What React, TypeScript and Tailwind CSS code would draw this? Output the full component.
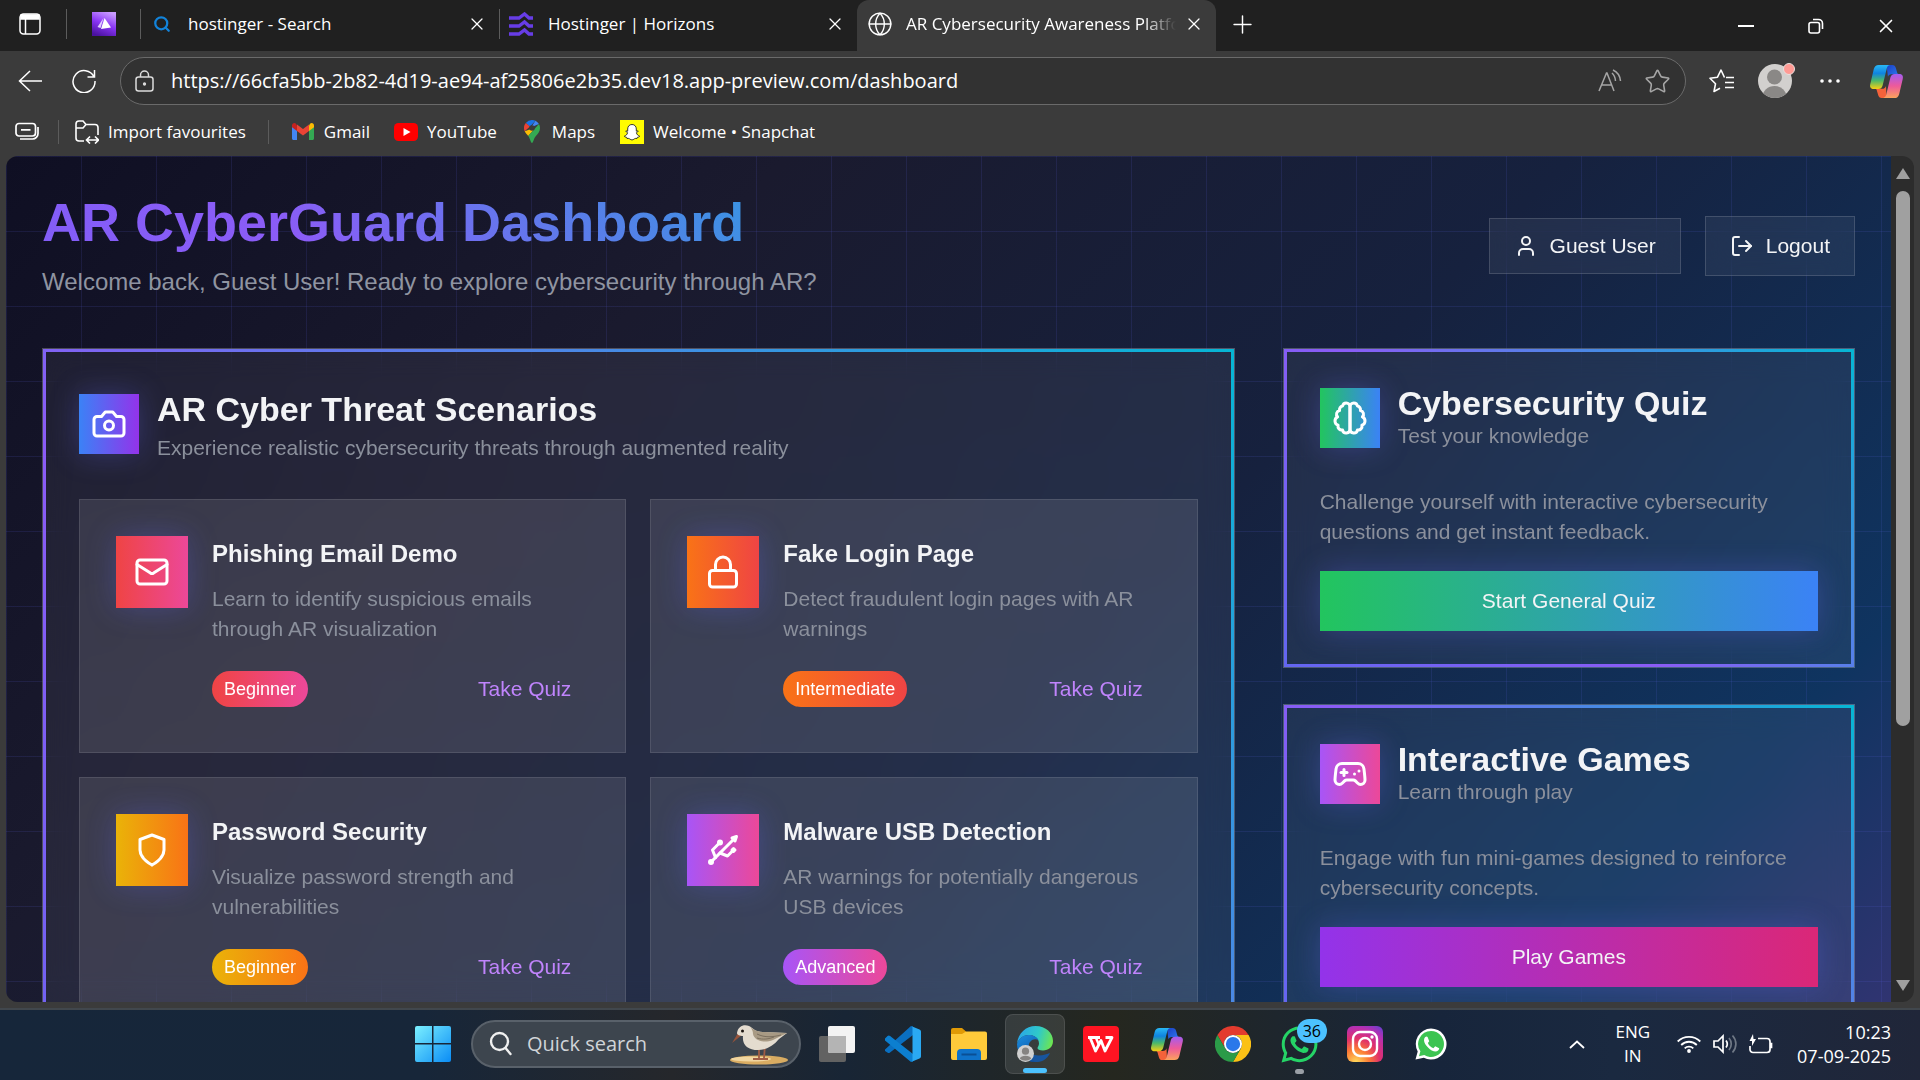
import React from "react";
import { Mail, Lock, Gamepad2, User, LogOut, X, Plus, Globe, Star, Search } from "lucide-react";
import { FaWhatsapp } from "react-icons/fa";

const UI = "font-['Open_Sans','Noto_Sans',sans-serif]";

type P = { className?: string };

function Copilot({ className }: P) {
  return (
    <svg viewBox="0 0 36 36" className={className} aria-hidden="true">
      <defs>
        <linearGradient id="cpA" x1="0" y1="0" x2="0" y2="1">
          <stop offset="0" stopColor="#29b8f5" />
          <stop offset=".35" stopColor="#0f83e0" />
          <stop offset=".65" stopColor="#4bb86a" />
          <stop offset="1" stopColor="#f7cf12" />
        </linearGradient>
        <linearGradient id="cpB" x1="0" y1="0" x2="0" y2="1">
          <stop offset="0" stopColor="#a45cf0" />
          <stop offset=".5" stopColor="#ee5a9a" />
          <stop offset="1" stopColor="#fba35c" />
        </linearGradient>
        <linearGradient id="cpC" x1="0" y1="0" x2="1" y2="1">
          <stop offset="0" stopColor="#1a3fc4" />
          <stop offset="1" stopColor="#2f7cf0" />
        </linearGradient>
      </defs>
      <path d="M18 1h6c2 0 3 1 3.600 3l1.400 5c.4 1 1 1.500 2 1.500h-8c-2 0-3 1-3.500 2.500z" fill="url(#cpC)" />
      <path d="M18 35h-5c-2 0-3-1-3.600-3L8 27c-.4-1-1-1.500-2-1.500h7c3 0 4-1.500 4.500-3z" fill="#f4623a" />
      <path d="M10 1h12c-2 0-3 1.300-3.600 3L14 22c-.7 2.400-2 3.700-4.500 3.700H5c-3 0-4.500-2-3.700-5L5 5c.9-2.800 2.200-4 5-4z" fill="url(#cpA)" />
      <path d="M26 35H14c2 0 3-1.300 3.600-3L22 14c.7-2.400 2-3.700 4.500-3.700H31c3 0 4.500 2 3.700 5L31 31c-.9 2.800-2.200 4-5 4z" fill="url(#cpB)" />
    </svg>
  );
}

function Line({ className, children }: { className?: string; children: React.ReactNode }) {
  return (
    <svg viewBox="0 0 24 24" fill="none" stroke="currentColor" strokeWidth="2" strokeLinecap="round" strokeLinejoin="round" className={className} aria-hidden="true">
      {children}
    </svg>
  );
}

function Brain({ className }: P) {
  return (
    <Line className={className}>
      <path d="M9.500 2A2.500 2.500 0 0 1 12 4.500v15a2.500 2.500 0 0 1-4.960.44 2.500 2.500 0 0 1-2.960-3.080 3 3 0 0 1-.34-5.580 2.500 2.500 0 0 1 1.320-4.240 2.500 2.500 0 0 1 1.980-3A2.500 2.500 0 0 1 9.500 2Z" />
      <path d="M14.500 2A2.500 2.500 0 0 0 12 4.500v15a2.500 2.500 0 0 0 4.960.44 2.500 2.500 0 0 0 2.960-3.080 3 3 0 0 0 .34-5.580 2.500 2.500 0 0 0-1.320-4.240 2.500 2.500 0 0 0-1.980-3A2.500 2.500 0 0 0 14.500 2Z" />
    </Line>
  );
}

function ShieldIcon({ className }: P) {
  return (
    <Line className={className}>
      <path d="M12 22s8-4 8-10V5l-8-3-8 3v7c0 6 8 10 8 10" />
    </Line>
  );
}

function CameraIcon({ className }: P) {
  return (
    <Line className={className}>
      <path d="M14.500 4h-5L7 7H4a2 2 0 0 0-2 2v9a2 2 0 0 0 2 2h16a2 2 0 0 0 2-2V9a2 2 0 0 0-2-2h-3l-2.500-3z" />
      <circle cx="12" cy="13" r="3" />
    </Line>
  );
}

function UsbIcon({ className }: P) {
  return (
    <Line className={className}>
      <circle cx="10" cy="7" r="1" fill="currentColor" />
      <circle cx="4" cy="20" r="1" fill="currentColor" />
      <path d="M4.700 19.300 19 5" />
      <path d="m21 3-3 1 2 2Z" fill="currentColor" />
      <path d="M9.260 7.680 5 12l2 5" />
      <path d="m10 14 5 2 3.500-3.500" />
      <path d="m18 12 1-1 1 1-1 1Z" fill="currentColor" />
    </Line>
  );
}

/* ---------- browser chrome ---------- */

function TabStrip() {
  return (
    <div className="flex h-[51px] shrink-0 items-center bg-[#202020] pb-[3px] pl-[18px] text-[17px] text-white">
      <button aria-label="Tab actions" className="w-6">
        <svg viewBox="0 0 24 24" className="size-6" fill="none" stroke="#fff" strokeWidth="1.500">
          <rect x="2" y="2" width="20" height="20" rx="3.500" />
          <path d="M3 3h18v4H3z" fill="#fff" />
          <path d="M7.500 7v15" />
        </svg>
      </button>
      <span className="ml-6 h-[30px] w-px bg-[#5c5c5c]" />
      <button aria-label="Pinned tab" className="ml-[25px]">
        <svg viewBox="0 0 24 24" className="size-6">
          <defs>
            <linearGradient id="pin" x1=".3" y1="1" x2=".7" y2="0">
              <stop offset="0" stopColor="#4a12a0" />
              <stop offset=".5" stopColor="#8a35f5" />
              <stop offset="1" stopColor="#c99bff" />
            </linearGradient>
          </defs>
          <path d="M0 0h24v24H0z" fill="url(#pin)" />
          <path d="M11.500 6 5.500 15l3 1z" fill="#e2cfff" />
          <path d="M12.500 6 9 17l10-1.500z" fill="#fff" />
        </svg>
      </button>
      <span className="ml-6 h-[30px] w-px bg-[#5c5c5c]" />
      <div className="flex w-[358px] shrink-0 items-center pl-3">
        <Search className="size-[18px] text-[#1283da]" strokeWidth={3} />
        <span className="ml-[17px] flex-1">hostinger - Search</span>
        <button aria-label="Close tab" className="mr-3">
          <X className="size-5" strokeWidth={1.5} />
        </button>
      </div>
      <span className="h-[30px] w-px bg-[#5c5c5c]" />
      <div className="flex w-[357px] shrink-0 items-center pl-[9px]">
        <svg viewBox="0 0 24 24" className="size-6" fill="none" stroke="#673de6" strokeWidth="3.400">
          <path d="M0 6h10l5.500-4L20 6h4M0 14h10l5.500-4 4.500 4h4M0 22h10l5.500-4 4.500 4h4" />
        </svg>
        <span className="ml-[15px] flex-1">Hostinger | Horizons</span>
        <button aria-label="Close tab" className="mr-3">
          <X className="size-5" strokeWidth={1.5} />
        </button>
      </div>
      <div className="flex h-[51px] w-[359px] shrink-0 items-center self-start rounded-t-xl bg-[#3b3b3b] pr-3 pb-[3px] pl-[10px]">
        <Globe className="size-[26px]" strokeWidth={1.3} />
        <span className="ml-[13px] min-w-0 flex-1 overflow-hidden whitespace-nowrap [mask-image:linear-gradient(90deg,#000_88%,transparent)]">
          AR Cybersecurity Awareness Platform
        </span>
        <button aria-label="Close tab" className="ml-2">
          <X className="size-5" strokeWidth={1.5} />
        </button>
      </div>
      <button aria-label="New tab" className="ml-3">
        <Plus className="size-[29px]" strokeWidth={1.2} />
      </button>
      <div className="ml-auto flex items-center gap-[54px] pt-1 pr-[26px]">
        <button aria-label="Minimise" className="flex h-4 w-4 items-center">
          <span className="block h-0.5 w-4 bg-white" />
        </button>
        <button aria-label="Restore">
          <svg viewBox="0 0 16 16" className="size-4" fill="none" stroke="#fff" strokeWidth="1.600">
            <rect x="1" y="4.500" width="10.500" height="10.500" rx="2" />
            <path d="M5 1.500h5.500a4 4 0 0 1 4 4V11" />
          </svg>
        </button>
        <button aria-label="Close window">
          <X className="-m-[3px] size-[22px]" strokeWidth={1.8} />
        </button>
      </div>
    </div>
  );
}

function AddressBar() {
  return (
    <div className="flex h-[60px] shrink-0 items-center pr-4 pl-[18px] text-white">
      <button aria-label="Back">
        <svg viewBox="0 0 24 24" className="size-6" fill="none" stroke="#fff" strokeWidth="1.500">
          <path d="M24 12H1M12 2 1.500 12 12 22" />
        </svg>
      </button>
      <button aria-label="Reload" className="ml-[30px]">
        <svg viewBox="0 0 24 24" className="size-6" fill="none" stroke="#fff" strokeWidth="1.500">
          <path d="M22 8A11 11 0 1 0 23 12M22.500 1v7h-7" />
        </svg>
      </button>
      <div className="ml-6 flex h-12 flex-1 items-center rounded-full border border-[#6a6a6a] bg-[#323232] pr-[14px] pl-[14px]">
        <svg viewBox="0 0 20 22" className="h-[22px] w-5" fill="none" stroke="#dcdcdc" strokeWidth="1.500" aria-hidden="true">
          <rect x="1" y="7" width="17" height="14" rx="2.500" />
          <path d="M5.500 7V5a4 4 0 0 1 8 0v2" />
          <circle cx="9.500" cy="14" r=".9" fill="#dcdcdc" />
        </svg>
        <input
          aria-label="Address"
          className="ml-4 min-w-0 flex-1 bg-transparent text-[20px] text-white outline-none"
          defaultValue="https://66cfa5bb-2b82-4d19-ae94-af25806e2b35.dev18.app-preview.com/dashboard"
        />
        <button aria-label="Read aloud">
          <svg viewBox="0 0 24 24" className="size-6" fill="none" stroke="#a6a6a6" strokeWidth="1.500">
            <path d="M1 22 8.500 4h.5L16 22M3.500 16h10M14 4c2 1.800 3.300 4.500 3.500 8M15 1c4 1.800 7 5.500 7.500 11" />
          </svg>
        </button>
        <button aria-label="Add to favourites" className="ml-[22px]">
          <Star className="size-[27px] text-[#a6a6a6]" strokeWidth={1.4} />
        </button>
      </div>
      <button aria-label="Favourites" className="ml-[23px]">
        <svg viewBox="0 0 26 24" className="h-6 w-[26px]" fill="none" stroke="#fff" strokeWidth="1.600" strokeLinejoin="round">
          <path d="M15.500 8.500 12 1 8.500 8.200 1 9.300l5.500 5.500L5 22.500l6-3.300M17 8.500h8M16 13.500h9M16 18.500h9" />
        </svg>
      </button>
      <button aria-label="Profile" className="relative ml-[22px]">
        <svg viewBox="0 0 36 36" className="size-9">
          <clipPath id="av"><circle cx="18" cy="18" r="17" /></clipPath>
          <g clipPath="url(#av)">
            <path d="M0 0h36v36H0z" fill="#d2d0ce" />
            <circle cx="17.500" cy="14" r="7.500" fill="#8a8886" />
            <ellipse cx="17.500" cy="34" rx="12" ry="11" fill="#8a8886" />
          </g>
        </svg>
        <span className="absolute top-0 -right-0.5 size-3 rounded-full border border-[#e8e0de] bg-[#ff9a94]" />
      </button>
      <button aria-label="Settings and more" className="ml-[27px]">
        <svg viewBox="0 0 20 4" className="h-1 w-5" fill="#fff"><circle cx="2" cy="2" r="1.800" /><circle cx="10" cy="2" r="1.800" /><circle cx="18" cy="2" r="1.800" /></svg>
      </button>
      <button aria-label="Copilot" className="ml-[29px]"><Copilot className="size-[35px]" /></button>
    </div>
  );
}

function Bookmarks() {
  return (
    <div className="flex h-[45px] shrink-0 items-center pb-1 pl-[15px] text-[17px] text-white">
      <button aria-label="Collections">
        <svg viewBox="0 0 24 20" className="h-5 w-6" fill="none" stroke="#fff" strokeWidth="1.700">
          <rect x="1" y="1.500" width="19.500" height="12.500" rx="3" />
          <path d="M6 7.800h9.500M23 5v6.500a5.500 5.500 0 0 1-5.500 5.500H5" />
        </svg>
      </button>
      <span className="ml-[19px] h-6 w-px bg-[#5c5c5c]" />
      <a href="#import" className="ml-4 flex items-center gap-[9px]">
        <svg viewBox="0 0 24 24" className="size-6" fill="none" stroke="#fff" strokeWidth="1.600">
          <path d="M9 21H4a3 3 0 0 1-3-3V4a3 3 0 0 1 3-3h4l3 3.500h9a3 3 0 0 1 3 3V15M1 8h7l3-3.500M12 20h11M15 16.500 11.500 20l3.500 3.500M20 16.500l3.500 3.500-3.500 3.500" />
        </svg>
        <span>Import favourites</span>
      </a>
      <span className="ml-[22px] h-6 w-px bg-[#5c5c5c]" />
      <a href="#gmail" className="ml-[23px] flex items-center gap-[10px]">
        <svg viewBox="0 0 22 17" className="h-[17px] w-[22px]">
          <path d="M0 2v13.500C0 16.300.7 17 1.500 17H5V6z" fill="#4285f4" />
          <path d="M22 2v13.500c0 .8-.7 1.500-1.500 1.500H17V6z" fill="#34a853" />
          <path d="M17 2.500V8l5-3.800V2.500C22 .5 19.800-.7 18 .7z" fill="#fbbc04" />
          <path d="M0 2.500v1.700L5 8V2.500L4 .7C2.200-.7 0 .5 0 2.500z" fill="#c5221f" />
          <path d="M5 8V1.500L11 6l6-4.500V8l-6 4.500z" fill="#ea4335" />
        </svg>
        <span>Gmail</span>
      </a>
      <a href="#youtube" className="ml-6 flex items-center gap-[9px]">
        <svg viewBox="0 0 24 18" className="h-[18px] w-6">
          <rect width="24" height="18" rx="4.500" fill="#f00" />
          <path d="m9.500 5 7 4-7 4z" fill="#fff" />
        </svg>
        <span>YouTube</span>
      </a>
      <a href="#maps" className="ml-[27px] flex items-center gap-3">
        <svg viewBox="0 0 16 23" className="h-[23px] w-4">
          <path d="M8 0a8 8 0 0 0-6.200 3L6 6.500 11.500.8A8 8 0 0 0 8 0z" fill="#1a73e8" />
          <path d="M1.800 3A8 8 0 0 0 .7 11.300L6 6.500z" fill="#ea4335" />
          <path d="M11.500.8 5.600 9.500l4.600-3.400 4.700-2A8 8 0 0 0 11.500.8z" fill="#4285f4" />
          <path d="M.7 11.300C1.500 13 3 14.500 4.200 16L10.500 9 5.600 9.500z" fill="#fbbc04" />
          <path d="M14.900 4.100 10.500 9l-6.300 7c2 2.500 2.600 7 3.800 7s1.500-4 3.500-6.500C14 13.500 16 11.500 16 8c0-1.500-.4-2.800-1.100-3.900z" fill="#34a853" />
          <circle cx="8" cy="8" r="2.800" fill="#3b3b3b" />
        </svg>
        <span>Maps</span>
      </a>
      <a href="#snapchat" className="ml-[25px] flex items-center gap-[9px]">
        <svg viewBox="0 0 24 24" className="size-6">
          <path d="M0 0h24v24H0z" fill="#fffc00" />
          <path d="M12 4.500c2.800 0 4.300 2 4.300 4.500v2.200l1.800-.3c.4.700-1 1.400-1.700 1.800.3 1.800 1.800 3 3.300 3.400-.2 1-1.600 1-2.300 1.200l-.4 1.200c-1.600-.3-2.200 0-3.100.7-1.200.9-2.600.9-3.800 0-.9-.7-1.500-1-3.100-.7L6.600 17.300c-.7-.2-2.100-.2-2.300-1.200 1.500-.4 3-1.600 3.300-3.400-.7-.4-2.100-1.100-1.700-1.800l1.800.3V9c0-2.500 1.500-4.500 4.300-4.500z" fill="#fff" stroke="#222" strokeWidth=".9" />
        </svg>
        <span>Welcome • Snapchat</span>
      </a>
    </div>
  );
}

/* ---------- dashboard ---------- */

const GLOW = "shadow-[0_0_30px_rgba(99,102,241,0.3)]";

function GradientCard({ className = "", children }: { className?: string; children: React.ReactNode }) {
  return (
    <section className={"border border-white/20 bg-white/[0.06] backdrop-blur-[15px] " + className}>
      <div className="h-full border-[3px] p-[33px] [border-image:linear-gradient(45deg,#6366f1,#8b5cf6_42%,#06b6d4)_1]">{children}</div>
    </section>
  );
}

const scenarios = [
  { title: "Phishing Email Demo", text: "Learn to identify suspicious emails through AR visualization", level: "Beginner", tone: "from-[#ef4444] to-[#ec4899]", icon: Mail },
  { title: "Fake Login Page", text: "Detect fraudulent login pages with AR warnings", level: "Intermediate", tone: "from-[#f97316] to-[#ef4444]", icon: Lock },
  { title: "Password Security", text: "Visualize password strength and vulnerabilities", level: "Beginner", tone: "from-[#eab308] to-[#f97316]", icon: ShieldIcon },
  { title: "Malware USB Detection", text: "AR warnings for potentially dangerous USB devices", level: "Advanced", tone: "from-[#a855f7] to-[#ec4899]", icon: UsbIcon },
];

function SideCard({ title, sub, text, action, iconTone, buttonTone, icon }: { title: string; sub: string; text: string; action: string; iconTone: string; buttonTone: string; icon: React.ReactNode }) {
  return (
    <GradientCard>
      <div className="flex items-center gap-[18px]">
        <div className={"flex size-[60px] shrink-0 items-center justify-center bg-linear-to-r/srgb " + iconTone + " " + GLOW}>{icon}</div>
        <div>
          <h2 className="text-[34px] leading-9 font-bold text-gray-100">{title}</h2>
          <p className="text-[21px] leading-[30px] text-[#8b909c]">{sub}</p>
        </div>
      </div>
      <p className="mt-9 text-[21px] leading-[30px] text-[#8b909c]">{text}</p>
      <button className={"mt-6 h-[60px] w-full bg-linear-to-r/srgb text-[21px] text-gray-100 " + buttonTone + " " + GLOW}>{action}</button>
    </GradientCard>
  );
}

function Dashboard() {
  return (
    <main className="flex min-h-[1248px] flex-col bg-[linear-gradient(rgba(99,102,241,0.13)_1px,transparent_1px),linear-gradient(90deg,rgba(99,102,241,0.13)_1px,transparent_1px),linear-gradient(135deg,#0f0f23_0%,#1a1a2e_25%,#16213e_50%,#0f3460_75%,#533483_100%)] [background-size:75px_75px,75px_75px,100%_100%] p-9 font-['Liberation_Sans',Arial,sans-serif]">
      <header className="mb-12 flex items-center justify-between">
        <div>
          <h1 className="mb-3 bg-[linear-gradient(45deg,#825df7,#8b5cf6_32%,#3b92e2_90%)] bg-clip-text text-[54px] leading-[60px] font-bold text-transparent">AR CyberGuard Dashboard</h1>
          <p className="text-2xl leading-9 text-[#8f94a1]">Welcome back, Guest User! Ready to explore cybersecurity through AR?</p>
        </div>
        <div className="flex items-center gap-6 text-[21px] leading-[30px] text-gray-100">
          <div className="flex items-center gap-3 border border-white/15 bg-white/[0.06] px-6 py-3 backdrop-blur-[15px]">
            <User className="size-6" />
            <span>Guest User</span>
          </div>
          <button className="flex h-[60px] items-center gap-3 border border-white/15 bg-white/[0.06] px-6 backdrop-blur-[15px]">
            <LogOut className="size-6" />
            Logout
          </button>
        </div>
      </header>

      <div className="grid flex-1 grid-cols-3 gap-12">
        <GradientCard className="col-span-2">
          <div className="flex items-center gap-[18px]">
            <div className={"flex size-[60px] shrink-0 items-center justify-center bg-linear-to-r/srgb from-[#3b82f6] to-[#9333ea] " + GLOW}>
              <CameraIcon className="size-9 text-white" />
            </div>
            <div>
              <h2 className="text-[34px] leading-[48px] font-bold text-gray-100">AR Cyber Threat Scenarios</h2>
              <p className="text-[21px] leading-[30px] text-[#8b909c]">Experience realistic cybersecurity threats through augmented reality</p>
            </div>
          </div>
          <div className="mt-9 grid grid-cols-2 gap-6">
            {scenarios.map(({ icon: Icon, ...s }) => (
              <article key={s.title} className="flex items-start gap-6 border border-white/10 bg-white/[0.1] p-9">
                <div className={"flex size-[72px] shrink-0 items-center justify-center bg-linear-to-r/srgb " + s.tone + " " + GLOW}>
                  <Icon className="size-9 text-white" />
                </div>
                <div className="flex-1">
                  <h3 className="text-2xl leading-9 font-bold text-gray-100">{s.title}</h3>
                  <p className="mt-3 text-[21px] leading-[30px] text-[#8b909c]">{s.text}</p>
                  <div className="mt-[18px] flex items-center justify-between">
                    <span className={"rounded-full bg-linear-to-r/srgb px-3 py-1.5 text-lg leading-6 text-white " + s.tone}>{s.level}</span>
                    <button className="h-[54px] px-[18px] text-[21px] text-[#c084fc]">Take Quiz</button>
                  </div>
                </div>
              </article>
            ))}
          </div>
        </GradientCard>
        <div className="flex flex-col gap-9">
          <SideCard title="Cybersecurity Quiz" sub="Test your knowledge" text="Challenge yourself with interactive cybersecurity questions and get instant feedback." action="Start General Quiz" iconTone="from-[#22c55e] to-[#3b82f6]" buttonTone="from-[#22c55e] to-[#3b82f6]" icon={<Brain className="size-9 text-white" />} />
          <SideCard title="Interactive Games" sub="Learn through play" text="Engage with fun mini-games designed to reinforce cybersecurity concepts." action="Play Games" iconTone="from-[#a855f7] to-[#ec4899]" buttonTone="from-[#9333ea] to-[#db2777]" icon={<Gamepad2 className="size-9 text-white" />} />
        </div>
      </div>
    </main>
  );
}

/* ---------- taskbar ---------- */

function TaskIcon({ label, children }: { label: string; children: React.ReactNode }) {
  return (
    <button aria-label={label} className="relative flex size-[60px] items-center justify-center">
      {children}
    </button>
  );
}

function Taskbar() {
  return (
    <footer className="flex h-[72px] shrink-0 items-center border-t-2 border-[#41474d] bg-[linear-gradient(90deg,#16263a_0%,#172639_22%,#25272b_35%,#182535_44%,#25271f_58%,#17253b_75%,#1a2940_84%,#202639_100%)] pr-[29px] pb-0.5 pl-[415px] text-white">
      <button aria-label="Start">
        <svg viewBox="0 0 36 36" className="size-9">
          <defs>
            <linearGradient id="win" x1="0" y1="0" x2="1" y2="1">
              <stop offset="0" stopColor="#7bf0ff" />
              <stop offset="1" stopColor="#0a8cf5" />
            </linearGradient>
          </defs>
          <path d="M2 0h15v17H0V2a2 2 0 0 1 2-2zM18.500 0H34a2 2 0 0 1 2 2v15H18.500zM0 18.500h17V36H2a2 2 0 0 1-2-2zM18.500 18.500H36V34a2 2 0 0 1-2 2H18.500z" fill="url(#win)" />
        </svg>
      </button>
      <label className="ml-5 flex h-12 w-[330px] shrink-0 items-center rounded-full border-2 border-[#59616a] bg-[#3d454e] pr-[10px] pl-4">
        <svg viewBox="0 0 24 28" className="h-7 w-6" fill="none" stroke="#f0f0f0" strokeWidth="2.400" strokeLinecap="round">
          <circle cx="10.500" cy="11.500" r="8.500" />
          <path d="m16.500 18 5 6" />
        </svg>
        <input aria-label="Search" placeholder="Quick search" className="ml-[14px] w-[150px] bg-transparent text-[20px] outline-none placeholder:text-[#d0d4d8]" />
        <svg viewBox="0 0 60 42" className="ml-auto h-[42px] w-[60px]" aria-hidden="true">
          <ellipse cx="30" cy="37" rx="29" ry="4.500" fill="#d9ac62" />
          <ellipse cx="22" cy="36" rx="20" ry="2.500" fill="#f1d6a0" />
          <path d="M30 22v13M36 22l-1 13M24 36h8M31 36h8" stroke="#a05c44" strokeWidth="1.800" fill="none" />
          <path d="M3 20 9 10l4 2z" fill="#96533a" />
          <path d="M8 10C9 3 15 1 20 3c4 2 6 6 14 6l24 1-8 6c-5 6-12 11-21 11-10 0-16-5-15-14-3 0-6-1-6-3z" fill="#e4dccf" />
          <path d="M21 4c5 4 9 5 15 5l22 1-14 7c-10 4-19 0-20-6 0-3-1-5-3-7z" fill="#a89a84" />
          <path d="M28 11c8 4 16 3 24 1M28 15c6 2 12 1 17-1" stroke="#7b6f5e" fill="none" />
          <circle cx="13.500" cy="8" r="1.500" fill="#1b1410" />
        </svg>
      </label>
      <div className="ml-[6px] flex shrink-0 items-center gap-[6px]">
        <TaskIcon label="Task view">
          <svg viewBox="0 0 36 40" className="h-10 w-9">
            <rect x="0" y="12" width="27" height="26" rx="2" fill="#626262" />
            <rect x="9" y="2" width="27" height="27" rx="2" fill="#f3f3f3" />
            <path d="M9 12h18v17H11a2 2 0 0 1-2-2z" fill="#b4b4b4" />
          </svg>
        </TaskIcon>
        <TaskIcon label="Visual Studio Code">
          <svg viewBox="0 0 36 36" className="size-9">
            <path d="M0 23.500 26 0l2 .5V9L5 26.500a2 2 0 0 1-2.600 0L0 25z" fill="#0a6fc0" />
            <path d="M0 12.500 2.500 10a2 2 0 0 1 2.600 0L28 28v7.500L26 36 0 14.500a1.500 1.500 0 0 1 0-2z" fill="#0c7fd0" />
            <path d="M26 0 34.500 3.500A2.500 2.500 0 0 1 36 6v24a2.500 2.500 0 0 1-1.500 2.500L26 36c1 0 1.500-.8 1.500-2V2C27.500.8 27 0 26 0z" fill="#2aa9f2" />
          </svg>
        </TaskIcon>
        <TaskIcon label="File Explorer">
          <svg viewBox="0 0 36 34" className="h-[34px] w-9">
            <path d="M0 3a2 2 0 0 1 2-2h9l4 3.500V8H0z" fill="#e09a06" />
            <path d="M0 7h11l4-2.500h19a2 2 0 0 1 2 2V31a2 2 0 0 1-2 2H2a2 2 0 0 1-2-2z" fill="#ffca3a" />
            <path d="M6 33V26a4 4 0 0 1 4-4h16a4 4 0 0 1 4 4v7z" fill="#0f72c9" />
            <path d="M10.500 27.500h15" stroke="#0a4f94" strokeWidth="2" />
          </svg>
        </TaskIcon>
        <button aria-label="Microsoft Edge" className="relative flex size-[60px] items-center justify-center rounded-lg border border-white/10 bg-white/10">
          <svg viewBox="0 0 36 36" className="size-9">
            <defs>
              <linearGradient id="edT" x1="0" y1=".4" x2="1" y2=".6">
                <stop offset="0" stopColor="#2aa5e8" />
                <stop offset=".55" stopColor="#2fc9c9" />
                <stop offset="1" stopColor="#6ee650" />
              </linearGradient>
              <linearGradient id="edB" x1="0" y1="0" x2=".6" y2="1">
                <stop offset="0" stopColor="#1b8fe0" />
                <stop offset="1" stopColor="#0c4fa3" />
              </linearGradient>
            </defs>
            <path d="M0 18C1 7 9 0 18.500 0 29 0 36 7 36 15c0 6-4.500 9.500-10 9.500-3.500 0-5.500-1-5.500-2.500 0-1 1.500-2 1.500-4.500C22 12 17 9 11.500 9 6 9 2 12.500 0 18z" fill="url(#edT)" />
            <path d="M0 18c2-6 6.500-9 11.500-9 4.500 0 8.500 2 10 5-5-2.500-10 1-10 7 0 8 7 13.500 14 12.500-3 2-5 2.500-7.500 2.500C8 36 0 28 0 18z" fill="url(#edB)" />
            <path d="M12 21c0 5 4 8.500 9.500 8.500 5 0 9-1.800 11.500-2.500-1.500 4-6 9-13.500 9C12 35 8 28 12 21z" fill="#17559f" />
          </svg>
          <svg viewBox="0 0 18 18" className="absolute bottom-[11px] left-[11px] size-[17px]">
            <circle cx="9" cy="9" r="9" fill="#d0d0d0" />
            <circle cx="9" cy="6.500" r="3.800" fill="#858381" />
            <path d="M3 14.500c1-4 11-4 12 0A9 9 0 0 1 3 14.500z" fill="#858381" />
          </svg>
          <span className="absolute bottom-0 left-[17px] h-[5px] w-6 rounded-full bg-[#4cc2ff]" />
        </button>
        <TaskIcon label="WPS Office">
          <svg viewBox="0 0 36 36" className="size-9">
            <rect width="36" height="36" rx="4" fill="#ff1422" />
            <path d="M5 11.500h12M7 11.500l5.500 13.500L18 14.500l4 10.500 7-13.500h-6.500" fill="none" stroke="#fff" strokeWidth="2.800" strokeLinejoin="round" />
            <path d="m13 12 3 7" stroke="#fff" strokeWidth="2.400" />
          </svg>
        </TaskIcon>
        <TaskIcon label="Copilot"><Copilot className="size-[34px]" /></TaskIcon>
        <TaskIcon label="Google Chrome">
          <svg viewBox="0 0 48 48" className="size-9">
            <path d="M24 12h20.800A24 24 0 0 0 3.200 12l10.400 18A12 12 0 0 1 24 12z" fill="#e33b2e" />
            <path d="M24 12h20.800A24 24 0 0 1 24 48l10.400-18A12 12 0 0 0 24 12z" fill="#fbc116" />
            <path d="M13.600 30 3.200 12A24 24 0 0 0 24 48l10.400-18a12 12 0 0 1-20.800 0z" fill="#2b9b48" />
            <circle cx="24" cy="24" r="12" fill="#fff" />
            <circle cx="24" cy="24" r="9.500" fill="#2a78ea" />
          </svg>
        </TaskIcon>
        <TaskIcon label="WhatsApp, 36 unread">
          <FaWhatsapp className="size-[41px] text-[#25d366]" />
          <span className="absolute top-[5px] right-0.5 flex h-6 items-center rounded-full bg-[#4cc2ff] px-[6px] text-[16px] text-black">36</span>
          <span className="absolute bottom-0 left-[26px] h-[5px] w-[9px] rounded-full bg-[#9a9fa6]" />
        </TaskIcon>
        <TaskIcon label="Instagram">
          <svg viewBox="0 0 36 36" className="size-9">
            <defs>
              <radialGradient id="ig" cx=".25" cy="1" r="1.200">
                <stop offset="0" stopColor="#ffd95a" />
                <stop offset=".3" stopColor="#fb7a35" />
                <stop offset=".55" stopColor="#e0306b" />
                <stop offset=".8" stopColor="#b82fb0" />
                <stop offset="1" stopColor="#6a3fd0" />
              </radialGradient>
            </defs>
            <rect width="36" height="36" rx="6" fill="url(#ig)" />
            <g fill="none" stroke="#fff" strokeWidth="2.400">
              <rect x="6" y="6" width="24" height="24" rx="7" />
              <circle cx="18" cy="18" r="6" />
            </g>
            <circle cx="25" cy="11" r="1.700" fill="#fff" />
          </svg>
        </TaskIcon>
        <TaskIcon label="WhatsApp">
          <svg viewBox="0 0 32 32" className="size-8">
            <path d="M16 .5A15.500 15.500 0 1 1 8.800 29.700L.5 31.500l2.200-8A15.500 15.500 0 0 1 16 .5z" fill="#fff" />
            <path d="M16 3A13 13 0 1 1 9.200 27.100L4 28.300l1.400-5A13 13 0 0 1 16 3z" fill="#3cc451" />
            <path d="M11.500 8.500c-.7 0-2.500 1-2.500 3.700 0 4.500 7 11.300 11.500 11.300 2 0 3.700-1.500 3.700-3.300l-4-2-1.800 2c-3-1.200-4.500-2.800-5.500-5.200l1.300-1.800-1.500-4c-.2-.5-.6-.7-1.200-.7z" fill="#fff" />
          </svg>
        </TaskIcon>
      </div>
      <div className="ml-auto flex items-center text-[18px] leading-6">
        <button aria-label="Show hidden icons">
          <svg viewBox="0 0 16 9" className="h-[9px] w-4" fill="none" stroke="#fff" strokeWidth="1.800"><path d="m1 8 7-6.500L15 8" /></svg>
        </button>
        <button className="ml-[30px] text-center text-[17px]">ENG<br />IN</button>
        <svg viewBox="0 0 24 18" className="ml-[27px] h-[18px] w-6" fill="none" stroke="#fff" strokeWidth="1.800">
          <path d="M.7 6.500a16 16 0 0 1 22.600 0M4.200 10a11 11 0 0 1 15.600 0M7.700 13.300a6.200 6.200 0 0 1 8.600 0" />
          <circle cx="12" cy="16" r="1.900" fill="#fff" stroke="none" />
        </svg>
        <svg viewBox="0 0 24 20" className="ml-3 h-5 w-6" fill="none" stroke="#fff" strokeWidth="1.700">
          <path d="M1 7h4l5-5v16l-5-5H1zM13 6.500c1.500 2 1.500 5 0 7" />
          <path d="M16 4c3 3.500 3 8.500 0 12M19.500 1.500c4.500 5 4.500 12 0 17" stroke="#6f7885" />
        </svg>
        <svg viewBox="0 0 24 20" className="ml-3 h-5 w-6" fill="none" stroke="#fff" strokeWidth="1.700">
          <path d="M9 4.500h9a3 3 0 0 1 3 3v8a3 3 0 0 1-3 3H4a3 3 0 0 1-3-3V12M21.500 9.500h1v4h-1" />
          <path d="M4 0 .5 7H3v5l4-7H4.500z" fill="#fff" stroke="none" />
        </svg>
        <button className="ml-6 text-right">10:23<br />07-09-2025</button>
      </div>
    </footer>
  );
}

export default function App() {
  return (
    <div className={"flex h-screen flex-col overflow-hidden bg-[#3b3b3b] " + UI}>
      <TabStrip />
      <AddressBar />
      <Bookmarks />
      <div className="mx-[6px] mb-[6px] flex min-h-0 flex-1 overflow-hidden rounded-xl bg-[#2c2c2c]">
        <div className="min-w-0 flex-1 overflow-hidden">
          <Dashboard />
        </div>
        <div className="flex w-[23px] shrink-0 flex-col items-center pt-3 pb-[11px]" aria-hidden="true">
          <svg viewBox="0 0 14 12" className="h-3 w-[14px]" fill="#a0a0a0"><path d="M7 0 14 11H0z" /></svg>
          <div className="mt-[11px] h-[535px] w-[14px] rounded-full bg-[#a0a0a0]" />
          <svg viewBox="0 0 14 12" className="mt-auto h-3 w-[14px]" fill="#a0a0a0"><path d="M7 12 14 1H0z" /></svg>
        </div>
      </div>
      <Taskbar />
    </div>
  );
}
